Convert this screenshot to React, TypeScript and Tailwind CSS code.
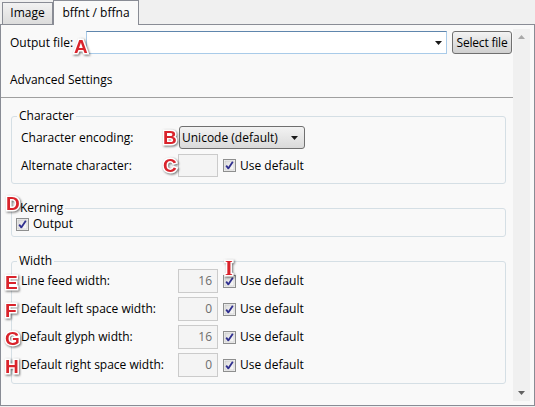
import React from 'react';

const FONT = "font-['Open_Sans','Noto_Sans',sans-serif]";

// red letter callouts drawn over the form
function Badge({ letter, className = '' }: { letter: string; className?: string }) {
  const serif = letter === 'I';
  return (
    <span
      className={`absolute pointer-events-none select-none text-[19px] leading-none font-black text-[#d9232b] [paint-order:stroke_fill] [-webkit-text-stroke:3px_#ffffff] [filter:drop-shadow(1px_1px_1px_rgba(0,0,0,0.55))] ${
        serif ? "font-['Liberation_Serif',serif]" : "font-['Liberation_Sans',Arial,sans-serif]"
      } ${className}`}
    >
      {letter}
    </span>
  );
}

function CheckBox() {
  return (
    <svg width="13" height="13" viewBox="0 0 13 13" className="shrink-0">
      <defs>
        <linearGradient id="cbg" x1="0" y1="0" x2="1" y2="1">
          <stop offset="0" stopColor="#dcdcdc" />
          <stop offset="1" stopColor="#fbfbfb" />
        </linearGradient>
      </defs>
      <rect x="0.5" y="0.5" width="12" height="12" fill="#f4f4f4" stroke="#8e8f8f" />
      <rect x="2" y="2" width="9" height="9" fill="url(#cbg)" stroke="#c4c4c4" strokeWidth="0.6" />
      <path d="M3.2 6.6 L5.3 9.4 L9.8 2.8" fill="none" stroke="#2f2f8f" strokeWidth="1.8" strokeLinejoin="round" />
    </svg>
  );
}

function UseDefault() {
  return (
    <div className="flex items-center gap-[4px]">
      <CheckBox />
      <span>Use default</span>
    </div>
  );
}

function NumberBox({ value }: { value: string }) {
  return (
    <div className="w-[40px] h-[24px] border border-[#cbcbcb] bg-[#f4f4f4] flex items-center justify-end pr-[5px] text-[#6d6d6d]">
      {value}
    </div>
  );
}

const widthRows = [
  { badge: 'E', label: 'Line feed width:', value: '16' },
  { badge: 'F', label: 'Default left space width:', value: '0' },
  { badge: 'G', label: 'Default glyph width:', value: '16' },
  { badge: 'H', label: 'Default right space width:', value: '0' },
];

export default function App() {
  return (
    <div className={`w-[535px] h-[407px] bg-[#f0f0f0] text-[12px] leading-[16px] text-black ${FONT}`}>
      {/* Tabs */}
      <div className="h-[24px] flex items-end pl-[2px]">
        <div className="w-[51px] h-[22px] border border-[#898c95] border-b-0 bg-gradient-to-b from-[#f2f2f2] to-[#dcdcdc] flex items-center justify-center pb-[1px]">
          Image
        </div>
        <div className="relative z-10 -mb-[1px] w-[86px] h-[25px] border border-[#898c95] border-b-0 bg-[#f9f9f9] flex items-start justify-center pt-[4px]">
          bffnt / bffna
        </div>
      </div>

      {/* Panel */}
      <div className="h-[382px] border border-[#898c95] bg-[#f9f9f9] p-[4px] flex">
        <div className="w-[508px] pt-[2px] flex flex-col">
          {/* Output file */}
          <div className="relative flex items-center h-[23px]">
            <span className="w-[81px] pl-[5px]">Output file:</span>
            <div className="w-[361px] h-[23px] border border-[#a9cbe9] border-t-[#5f86ad] bg-white flex items-center justify-end pr-[4px]">
              <svg width="7" height="4" viewBox="0 0 7 4">
                <path d="M0 0 H7 L3.5 4 Z" fill="#1a1a1a" />
              </svg>
            </div>
            <button className="ml-[5px] w-[60px] h-[23px] border border-[#707070] rounded-[3px] bg-gradient-to-b from-[#f3f3f3] to-[#d0d0d0] flex items-center justify-center whitespace-nowrap tracking-[-0.2px]">
              Select file
            </button>
            <Badge letter="A" className="left-[69px] top-[6px]" />
          </div>

          <div className="pl-[5px] pt-[18px] pb-[9px]">Advanced Settings</div>
          <div className="-ml-[4px] h-px bg-[#a0a0a0]" />

          {/* Character */}
          <fieldset className="relative mt-[10px] ml-[6px] w-[495px] border border-[#d5dfe5] rounded-[3px] px-[9px] pt-[2px] pb-[6px]">
            <legend className="-ml-[4px] px-[2px]">Character</legend>
            <div className="flex flex-col gap-[5px]">
              <div className="flex items-center h-[23px]">
                <span className="w-[158px]">Character encoding:</span>
                <div className="w-[126px] h-[23px] border border-[#707070] rounded-[3px] bg-gradient-to-b from-[#f3f3f3] to-[#dadada] flex items-center pl-[2px] pr-[6px] justify-between">
                  <span>Unicode (default)</span>
                  <svg width="7" height="4" viewBox="0 0 7 4">
                    <path d="M0 0 H7 L3.5 4 Z" fill="#1a1a1a" />
                  </svg>
                </div>
              </div>
              <div className="flex items-center h-[23px] gap-[5px]">
                <span className="w-[152px]">Alternate character:</span>
                <div className="w-[40px] h-[23px] border border-[#cbcbcb] bg-[#f4f4f4]" />
                <UseDefault />
              </div>
            </div>
            <Badge letter="B" className="left-[151px] top-[4px]" />
            <Badge letter="C" className="left-[151px] top-[32px]" />
          </fieldset>

          {/* Kerning */}
          <fieldset className="relative mt-[16px] ml-[6px] w-[495px] border border-[#d5dfe5] rounded-[3px] pl-[4px] pb-[4px]">
            <legend className="ml-[2px] px-[2px]">Kerning</legend>
            <div className="flex items-center gap-[4px] h-[16px]">
              <CheckBox />
              <span>Output</span>
            </div>
            <Badge letter="D" className="-left-[6px] -top-[22px]" />
          </fieldset>

          {/* Width */}
          <fieldset className="relative mt-[16px] ml-[6px] w-[495px] border border-[#d5dfe5] rounded-[3px] px-[9px] pb-[6px]">
            <legend className="-ml-[4px] px-[2px]">Width</legend>
            <div className="flex flex-col gap-[4px]">
              {widthRows.map((row) => (
                <div key={row.badge} className="relative flex items-center h-[24px] gap-[5px]">
                  <span className="w-[152px] whitespace-nowrap">{row.label}</span>
                  <NumberBox value={row.value} />
                  <UseDefault />
                  <Badge letter={row.badge} className="-left-[16px] top-[4px]" />
                </div>
              ))}
            </div>
            <Badge letter="I" className="left-[213px] -top-[11px] text-[20px]" />
          </fieldset>
        </div>

        {/* Scrollbar */}
        <div className="w-[17px] bg-[#f0f0f0] flex flex-col items-center justify-between py-[6px]">
          <svg width="7" height="4" viewBox="0 0 7 4">
            <path d="M3.5 0 L7 4 H0 Z" fill="#a8a8a8" />
          </svg>
          <svg width="7" height="4" viewBox="0 0 7 4">
            <path d="M0 0 H7 L3.5 4 Z" fill="#606060" />
          </svg>
        </div>
      </div>
    </div>
  );
}
